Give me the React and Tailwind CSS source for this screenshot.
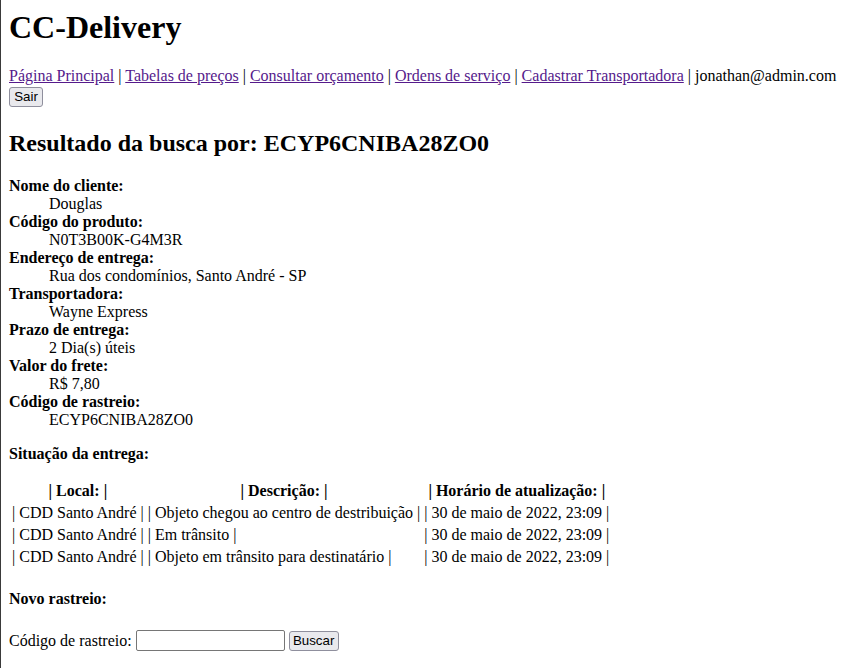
import React from "react";

const links = [
  "Página Principal",
  "Tabelas de preços",
  "Consultar orçamento",
  "Ordens de serviço",
  "Cadastrar Transportadora",
];

const fields = [
  ["Nome do cliente:", "Douglas"],
  ["Código do produto:", "N0T3B00K-G4M3R"],
  ["Endereço de entrega:", "Rua dos condomínios, Santo André - SP"],
  ["Transportadora:", "Wayne Express"],
  ["Prazo de entrega:", "2 Dia(s) úteis"],
  ["Valor do frete:", "R$ 7,80"],
  ["Código de rastreio:", "ECYP6CNIBA28ZO0"],
];

const rows = [
  ["CDD Santo André", "Objeto chegou ao centro de destribuição", "30 de maio de 2022, 23:09"],
  ["CDD Santo André", "Em trânsito", "30 de maio de 2022, 23:09"],
  ["CDD Santo André", "Objeto em trânsito para destinatário", "30 de maio de 2022, 23:09"],
];

export default function App() {
  return (
    <div className="min-h-[668px] w-[864px] border-l border-[#3a3a3a] bg-white pl-2 pt-[9px] font-['Liberation_Serif',serif] text-[16px] leading-[18px] text-black">
      <h1 className="mb-[21px] text-[32px] font-bold leading-[37px]">CC-Delivery</h1>

      <div className="whitespace-nowrap">
        {links.map((l) => (
          <React.Fragment key={l}>
            <a href="#" className="text-[#551a8b] underline">
              {l}
            </a>
            {" | "}
          </React.Fragment>
        ))}
        jonathan@admin.com
      </div>
      <button className="mt-[2px] block h-[20px] w-[34px] rounded-[3px] border border-[#8f8f9d] bg-[#e9e9ed] font-['Liberation_Sans',Arial,sans-serif] text-[13.33px] leading-[16px] text-black">
        Sair
      </button>

      <h2 className="mt-[22px] mb-[20px] text-[24px] font-bold leading-[28px]">
        Resultado da busca por: ECYP6CNIBA28ZO0
      </h2>

      <dl>
        {fields.map(([k, v]) => (
          <React.Fragment key={k}>
            <dt className="font-bold">{k}</dt>
            <dd className="ml-10">{v}</dd>
          </React.Fragment>
        ))}
      </dl>

      <p className="mt-4 font-bold">Situação da entrega:</p>

      <table className="mt-4 border-separate border-spacing-[2px]">
        <thead>
          <tr>
            <th className="p-[1px] text-center font-bold">| Local: |</th>
            <th className="p-[1px] text-center font-bold">| Descrição: |</th>
            <th className="p-[1px] text-center font-bold">| Horário de atualização: |</th>
          </tr>
        </thead>
        <tbody>
          {rows.map((r, i) => (
            <tr key={i}>
              {r.map((c, j) => (
                <td key={j} className="whitespace-nowrap p-[1px] text-left">
                  | {c} |
                </td>
              ))}
            </tr>
          ))}
        </tbody>
      </table>

      <h4 className="mt-[21px] font-bold">Novo rastreio:</h4>

      <form className="mt-[22px] flex items-center" onSubmit={(e) => e.preventDefault()}>
        <label>Código de rastreio:</label>
        <input
          type="text"
          className="ml-[4px] h-[21px] w-[149px] rounded-[2px] border border-[#767676] bg-white px-[2px] font-['Liberation_Sans',Arial,sans-serif] text-[13.33px]"
        />
        <button className="ml-[4px] h-[20px] w-[50px] rounded-[3px] border border-[#8f8f9d] bg-[#e9e9ed] font-['Liberation_Sans',Arial,sans-serif] text-[13.33px] leading-[16px] text-black">
          Buscar
        </button>
      </form>
    </div>
  );
}
